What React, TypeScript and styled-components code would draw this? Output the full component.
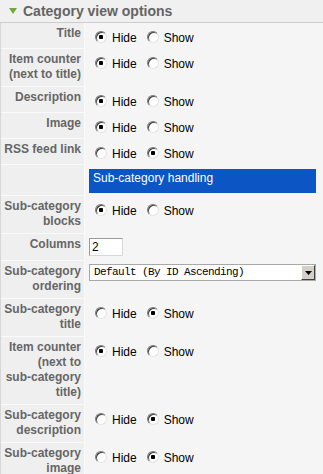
import styled, { createGlobalStyle } from "styled-components";

interface RadioRow {
  kind: "radio";
  label: string[];
  value: "hide" | "show";
}

interface InputRow {
  kind: "input";
  label: string[];
  value: string;
}

interface SelectRow {
  kind: "select";
  label: string[];
  value: string;
}

interface SectionRow {
  kind: "section";
  title: string;
}

type Row = RadioRow | InputRow | SelectRow | SectionRow;

const rows: Row[] = [
  { kind: "radio", label: ["Title"], value: "hide" },
  { kind: "radio", label: ["Item counter", "(next to title)"], value: "hide" },
  { kind: "radio", label: ["Description"], value: "hide" },
  { kind: "radio", label: ["Image"], value: "hide" },
  { kind: "radio", label: ["RSS feed link"], value: "show" },
  { kind: "section", title: "Sub-category handling" },
  { kind: "radio", label: ["Sub-category", "blocks"], value: "hide" },
  { kind: "input", label: ["Columns"], value: "2" },
  { kind: "select", label: ["Sub-category", "ordering"], value: "Default (By ID Ascending)" },
  { kind: "radio", label: ["Sub-category", "title"], value: "show" },
  {
    kind: "radio",
    label: ["Item counter", "(next to", "sub-category", "title)"],
    value: "hide",
  },
  { kind: "radio", label: ["Sub-category", "description"], value: "show" },
  { kind: "radio", label: ["Sub-category", "image"], value: "show" },
];

const GlobalStyle = createGlobalStyle`
  html, body {
    margin: 0;
    padding: 0;
    background: #f5f5f5;
    font-family: "Liberation Sans", Arial, sans-serif;
    font-size: 12px;
  }
`;

const Panel = styled.div`
  width: 323px;
  overflow: hidden;
  background: #f5f5f5;
`;

const Header = styled.div`
  height: 22px;
  display: flex;
  align-items: center;
  gap: 6px;
  padding-left: 9px;
  background: #f0f0f0;
  border-bottom: 1px solid #cdcdcd;
`;

const Title = styled.span`
  font-size: 14px;
  font-weight: bold;
  color: #646464;
  line-height: 16px;
`;

const ParamGrid = styled.div`
  display: grid;
  grid-template-columns: 83px 1fr;
  column-gap: 1px;
  background: #fafafa;
  border-left: 1px solid #d6d6d6;
`;

const KeyCell = styled.div`
  background: #efefef;
  border-bottom: 1px solid #fafafa;
  padding: 3px 3px 4px 2px;
  text-align: right;
  font-weight: bold;
  color: #666;
  line-height: 15px;
  white-space: nowrap;
`;

const ValueCell = styled.div<{ top: number }>`
  background: #f5f5f5;
  border-bottom: 1px solid #f5f5f5;
  padding: ${(props) => props.top}px 7px 2px 4px;
`;

const RadioGroup = styled.div`
  display: flex;
  align-items: center;
  height: 15px;
  padding-left: 6px;
  color: #000;
  line-height: 15px;
`;

const Radio = styled.span<{ checked: boolean }>`
  box-sizing: border-box;
  width: 12px;
  height: 12px;
  margin: 0 5px 3px 0;
  border-radius: 50%;
  border: 1px solid;
  border-color: #7a7a7a #e4e4e4 #e4e4e4 #7a7a7a;
  background: ${(props) =>
    props.checked
      ? "radial-gradient(circle, #000 0 2px, #fff 2.5px)"
      : "#fff"};
  box-shadow: inset 1px 1px 0 #404040;
`;

const Option = styled.span`
  margin-right: 10px;
`;

const TextInput = styled.div`
  box-sizing: border-box;
  width: 34px;
  height: 18px;
  margin-bottom: 2px;
  padding: 1px 2px;
  background: #fff;
  border: 1px solid;
  border-color: #9a9a9a #d8d8d8 #d8d8d8 #9a9a9a;
  line-height: 14px;
  color: #000;
`;

const SelectBox = styled.div`
  box-sizing: border-box;
  display: flex;
  height: 17px;
  background: #fff;
  border: 1px solid #a8a8a8;
`;

const SelectText = styled.span`
  flex: 1;
  padding-left: 4px;
  font-family: "Liberation Mono", "Courier New", monospace;
  font-size: 11px;
  letter-spacing: -0.6px;
  line-height: 15px;
  color: #000;
  white-space: nowrap;
`;

const SelectArrow = styled.span`
  box-sizing: border-box;
  width: 14px;
  height: 15px;
  display: flex;
  align-items: center;
  justify-content: center;
  background: #d4d0c8;
  border: 1px solid;
  border-color: #fff #404040 #404040 #fff;
`;

const SectionBar = styled.div`
  box-sizing: border-box;
  height: 24px;
  padding: 2px 4px;
  background: #0b55c4;
  color: #fff;
  line-height: 15px;
`;

const renderValue = (row: Row) => {
  if (row.kind === "radio") {
    return (
      <ValueCell top={8}>
        <RadioGroup>
          <Radio checked={row.value === "hide"} />
          <Option>Hide</Option>
          <Radio checked={row.value === "show"} />
          <Option>Show</Option>
        </RadioGroup>
      </ValueCell>
    );
  }
  if (row.kind === "input") {
    return (
      <ValueCell top={4}>
        <TextInput>{row.value}</TextInput>
      </ValueCell>
    );
  }
  if (row.kind === "select") {
    return (
      <ValueCell top={3}>
        <SelectBox>
          <SelectText>{row.value}</SelectText>
          <SelectArrow>
            <svg width="7" height="4" viewBox="0 0 7 4">
              <path d="M0 0h7L3.5 4z" fill="#000" />
            </svg>
          </SelectArrow>
        </SelectBox>
      </ValueCell>
    );
  }
  return null;
};

const App = () => {
  return (
    <>
      <GlobalStyle />
      <Panel>
        <Header>
          <svg width="8" height="6" viewBox="0 0 8 6">
            <path d="M0 0h8L4 6z" fill="#74a83f" />
          </svg>
          <Title>Category view options</Title>
        </Header>
        <ParamGrid>
          {rows.map((row, i) =>
            row.kind === "section" ? (
              [
                <KeyCell key={`k${i}`} />,
                <ValueCell key={`v${i}`} top={4}>
                  <SectionBar>{row.title}</SectionBar>
                </ValueCell>,
              ]
            ) : (
              [
                <KeyCell key={`k${i}`}>
                  {row.label.map((line, j) => (
                    <div key={j}>{line}</div>
                  ))}
                </KeyCell>,
                <div key={`v${i}`} style={{ display: "contents" }}>
                  {renderValue(row)}
                </div>,
              ]
            )
          )}
        </ParamGrid>
      </Panel>
    </>
  );
};

export default App;
